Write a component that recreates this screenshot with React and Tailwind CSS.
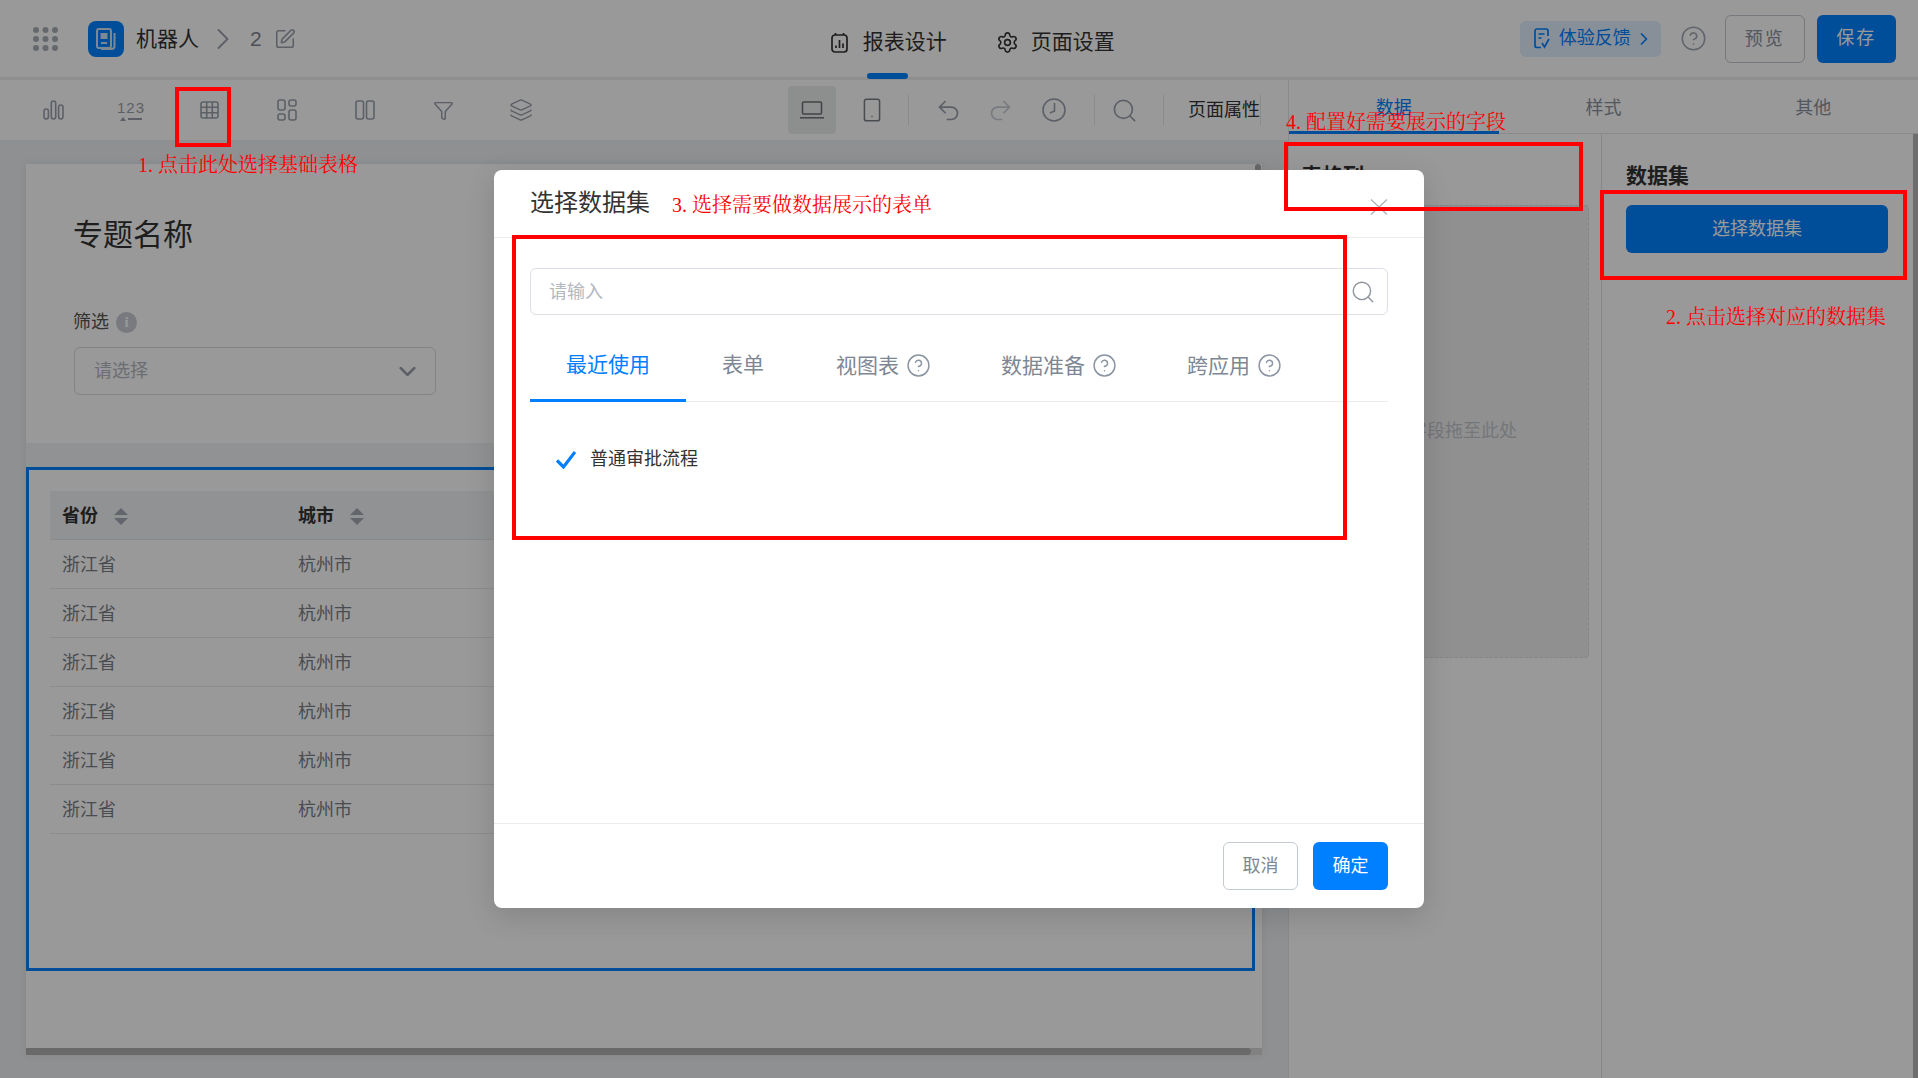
import React from 'react';
import {
  ChevronDown, ChevronRight, CircleHelp, Funnel, Layers, Redo2, Search, Settings, Smartphone, SquarePen, Undo2,
} from 'lucide-react';

const GridDots = () => (
  <svg width="25" height="24" viewBox="0 0 25 24" fill="#a8adb5">
    {[3, 12.5, 22].map((x) => [3, 12, 21].map((y) => <circle key={`${x}-${y}`} cx={x} cy={y} r="3" />))}
  </svg>
);

const LogoIcon = () => (
  <svg width="22" height="24" viewBox="0 0 22 24" fill="none" stroke="#cfe3f7" strokeWidth="2">
    <rect x="2" y="2" width="14" height="19" rx="2" />
    <rect x="5.5" y="6" width="7" height="6" fill="#cfe3f7" stroke="none" />
    <path d="M6 16h6M19.5 6v13a3 3 0 0 1-3 3H6" />
  </svg>
);

const BarsIcon = () => (
  <svg width="21" height="20" viewBox="0 0 21 20" fill="none" stroke="currentColor" strokeWidth="1.6">
    <rect x="1" y="9" width="4.4" height="10" rx="2.2" />
    <rect x="8.3" y="1" width="4.4" height="18" rx="2.2" />
    <rect x="15.6" y="5" width="4.4" height="14" rx="2.2" />
  </svg>
);

const TableIcon = () => (
  <svg width="19" height="18" viewBox="0 0 19 18" fill="none" stroke="currentColor" strokeWidth="1.6">
    <rect x="1" y="1" width="17" height="16" rx="2" />
    <path d="M1 6.3h17M1 11.7h17M6.7 1v16M12.3 1v16" />
  </svg>
);

const BlocksIcon = () => (
  <svg width="20" height="22" viewBox="0 0 20 22" fill="none" stroke="currentColor" strokeWidth="1.6">
    <rect x="1" y="1" width="7" height="10" rx="2" />
    <rect x="12" y="1" width="7" height="6" rx="2" />
    <rect x="1" y="15" width="7" height="6" rx="2" />
    <rect x="12" y="11" width="7" height="10" rx="2" />
  </svg>
);

const ColumnsIcon = () => (
  <svg width="20" height="20" viewBox="0 0 20 20" fill="none" stroke="currentColor" strokeWidth="1.6">
    <rect x="1" y="1" width="7.5" height="18" rx="2" />
    <rect x="11.5" y="1" width="7.5" height="18" rx="2" />
  </svg>
);

const LaptopIcon = () => (
  <svg width="24" height="18" viewBox="0 0 24 18" fill="none" stroke="currentColor" strokeWidth="1.5">
    <rect x="2.5" y="1" width="19" height="12" rx="1" />
    <path d="M0 16.8h24" />
  </svg>
);

const ClockIcon = () => (
  <svg width="24" height="24" viewBox="0 0 24 24" fill="none" stroke="currentColor" strokeWidth="1.6">
    <circle cx="12" cy="12" r="11" />
    <path d="M12.5 5v8L8 15" />
  </svg>
);

const ReportIcon = () => (
  <svg width="17" height="21" viewBox="0 0 17 21" fill="none" stroke="currentColor" strokeWidth="1.7">
    <rect x="1" y="3" width="15" height="17" rx="3" />
    <path d="M4.5 1v2M12.5 1v2M5 16v-2.5M8.5 16V8M12 16v-4.5" />
  </svg>
);

const FeedbackIcon = () => (
  <svg width="16" height="21" viewBox="0 0 16 21" fill="none" stroke="currentColor" strokeWidth="1.7">
    <path d="M7 19.5H3a2 2 0 0 1-2-2V3a2 2 0 0 1 2-2h9a2 2 0 0 1 2 2v5M4.5 6h6M4.5 10h3" />
    <path d="m8 15 2.5 4L15 11" />
  </svg>
);

const CloseIcon = () => (
  <svg width="18" height="16" viewBox="0 0 18 16" fill="none" stroke="#aab0b8" strokeWidth="1.2">
    <path d="M1 0.5 17 15.5M17 0.5 1 15.5" />
  </svg>
);

const CheckIcon = () => (
  <svg width="20" height="18" viewBox="0 0 20 18" fill="none" stroke="#0080ff" strokeWidth="3.2">
    <path d="M1 9.5 7.5 16 19 1" />
  </svg>
);

const SortIcon = () => (
  <span className="flex flex-col gap-[3px]">
    <span className="h-0 w-0 border-x-[7px] border-b-[7px] border-x-transparent border-b-[#a4aab4]"></span>
    <span className="h-0 w-0 border-x-[7px] border-t-[7px] border-x-transparent border-t-[#a4aab4]"></span>
  </span>
);

const ToolIcon = ({ children }) => (
  <div className="flex h-full w-[78px] items-center justify-center">{children}</div>
);

const rows = [1, 2, 3, 4, 5, 6];

const TopBar = () => (
  <div className="flex h-[80px] shrink-0 items-center border-b-[3px] border-[#eeeff1]">
    <div className="ml-[33px]"><GridDots /></div>
    <div className="ml-[30px] flex h-[36px] w-[36px] items-center justify-center rounded-[8px] bg-[#0080ff]">
      <LogoIcon />
    </div>
    <span className="ml-[12px] text-[21px] text-[#333]">机器人</span>
    <ChevronRight size={36} strokeWidth={1.25} className="ml-[6px] text-[#9aa1ab]" />
    <span className="ml-[9px] text-[21px] text-[#7d8590]">2</span>
    <SquarePen size={22} strokeWidth={1.7} className="ml-[12px] text-[#9aa1ab]" />
    <div className="ml-[535px] flex h-full items-center pt-[7px] text-[21px] text-[#333]">
      <div className="relative flex h-full items-center">
        <span className="mr-[15px]"><ReportIcon /></span>
        报表设计
        <span className="absolute bottom-[-2px] left-[36px] h-[6px] w-[41px] rounded-full bg-[#0080ff]"></span>
      </div>
      <Settings size={23} strokeWidth={1.7} className="ml-[49px] mr-[12px]" />
      页面设置
    </div>
    <div className="ml-[405px] flex h-[36px] w-[141px] items-center rounded-[6px] bg-[#e1eeff] pl-[14px] text-[18px] text-[#0080ff]">
      <FeedbackIcon />
      <span className="ml-[9px]">体验反馈</span>
      <ChevronRight size={20} strokeWidth={2} className="ml-[3px]" />
    </div>
    <CircleHelp size={27} strokeWidth={1.4} className="ml-[19px] text-[#a3a9b2]" />
    <button className="ml-[18px] h-[48px] w-[80px] rounded-[6px] border border-[#c4c9d1] pt-[2px] text-[18px] tracking-[2px] text-[#8a929e]">预览</button>
    <button className="ml-[12px] h-[48px] w-[79px] rounded-[6px] bg-[#0080ff] text-[18px] tracking-[2px] text-white">保存</button>
  </div>
);

const Toolbar = () => (
  <div className="ml-[2px] flex h-[60px] shrink-0 items-center pl-[12px] text-[#9aa1ab]">
    <ToolIcon><BarsIcon /></ToolIcon>
    <ToolIcon>
      <div className="flex flex-col items-center leading-none">
        <span className="text-[15px] leading-[17px] tracking-[1px]">123</span>
        <span className="mt-[1px] flex items-center gap-[2px]">
          <span className="h-0 w-0 border-x-[3px] border-b-[4px] border-x-transparent border-b-current"></span>
          <span className="h-[2px] w-[14px] bg-current"></span>
        </span>
      </div>
    </ToolIcon>
    <ToolIcon><TableIcon /></ToolIcon>
    <ToolIcon><BlocksIcon /></ToolIcon>
    <ToolIcon><ColumnsIcon /></ToolIcon>
    <ToolIcon><Funnel size={21} strokeWidth={1.7} /></ToolIcon>
    <ToolIcon><Layers size={24} strokeWidth={1.5} /></ToolIcon>
    <div className="ml-[228px] flex h-[48px] w-[48px] items-center justify-center rounded-[4px] bg-[#eceeef] text-[#6e7075]">
      <LaptopIcon />
    </div>
    <div className="ml-[12px] flex w-[48px] justify-center text-[#7b7f85]">
      <Smartphone size={26} strokeWidth={1.4} />
    </div>
    <div className="ml-[12px] h-[30px] w-px bg-[#e5e7ea]"></div>
    <Undo2 size={27} strokeWidth={1.5} className="ml-[26px]" />
    <Redo2 size={27} strokeWidth={1.5} className="ml-[25px] text-[#c9ced5]" />
    <span className="ml-[28px]"><ClockIcon /></span>
    <div className="ml-[28px] h-[30px] w-px bg-[#e5e7ea]"></div>
    <Search size={27} strokeWidth={1.5} className="ml-[16px]" />
    <div className="ml-[25px] h-[30px] w-px bg-[#e5e7ea]"></div>
    <span className="ml-[24px] text-[18px] text-[#333]">页面属性</span>
    <div className="h-[30px] w-px bg-[#e5e7ea]"></div>
  </div>
);

const Canvas = () => (
  <div className="flex min-h-0 flex-1 flex-col bg-[#edf0f3] pl-[26px] pt-[24px]">
    <div className="relative flex h-[891px] w-[1236px] flex-col bg-white shadow-[0_0_8px_rgba(0,0,0,0.08)]">
      <span className="absolute right-[1px] top-0 h-[6px] w-[6px] rounded-t-full bg-[#b0b0b0]"></span>
      <div className="h-[279px] shrink-0 pl-[48px] pt-[51px]">
        <h1 className="-ml-[1px] text-[30px] leading-[40px] text-[#333]">专题名称</h1>
        <div className="-ml-[1px] mt-[55px] flex items-center text-[18px] leading-[24px] text-[#555]">
          筛选
          <span className="ml-[7px] flex h-[21px] w-[21px] items-center justify-center rounded-full bg-[#c8ccd4] font-['Liberation_Serif',serif] text-[15px] font-bold text-white">i</span>
        </div>
        <div className="mt-[13px] flex h-[48px] w-[362px] items-center justify-between rounded-[6px] border border-[#d8dbe0] pl-[19px] pr-[14px] text-[18px] text-[#b3b8c0]">
          请选择
          <ChevronDown size={27} strokeWidth={2.5} className="text-[#9aa1ab]" />
        </div>
      </div>
      <div className="h-[24px] shrink-0 bg-[#f1f3f5]"></div>
      <div className="h-[504px] w-[1229px] shrink-0 border-[3px] border-[#0080ff] px-[21px] pt-[21px] text-[18px]">
        <div className="flex h-[49px] items-center border-b border-[#e3e6ea] bg-[#f1f3f6] pl-[12px] pt-[2px] font-bold text-[#333]">
          <div className="flex w-[236px] items-center gap-[16px]">省份<SortIcon /></div>
          <div className="flex items-center gap-[16px]">城市<SortIcon /></div>
        </div>
        {rows.map((r) => (
          <div key={r} className="flex h-[49px] items-center border-b border-[#e8eaee] pl-[12px] pt-[2px] text-[#7a7f87]">
            <div className="w-[236px]">浙江省</div>
            <div>杭州市</div>
          </div>
        ))}
      </div>
      <div className="mt-auto flex h-[7px] bg-[#d8d8d8]">
        <div className="h-full w-[1225px] rounded-r-full bg-[#b0b0b0]"></div>
      </div>
    </div>
  </div>
);

const SidePanel = () => (
  <div className="flex min-h-0 flex-1 flex-col border-l border-[#e3e6ea]">
    <div className="flex h-[54px] shrink-0 border-b border-[#e3e6ea] text-[18px] text-[#8a929e]">
      {['数据', '样式', '其他'].map((t, i) => (
        <div key={t} className={`relative flex flex-1 items-center justify-center pt-[3px] ${i === 0 ? 'text-[#0080ff]' : ''}`}>
          {t}
          {i === 0 && <span className="absolute bottom-[-1px] left-0 h-[3px] w-[210px] bg-[#0080ff]"></span>}
        </div>
      ))}
    </div>
    <div className="relative flex min-h-0 flex-1">
      <div className="w-[313px] shrink-0 border-r border-[#dfe2e6] pl-[12px] pt-[27px]">
        <div className="text-[21px] font-bold leading-[30px] text-[#333]">表格列</div>
        <div className="mt-[14px] flex h-[453px] w-[288px] items-center justify-center rounded-[4px] border border-dashed border-[#dcdfe3] bg-[#f1f1f1] text-[18px] text-[#c2c6cc]">
          请将字段拖至此处
        </div>
      </div>
      <div className="flex-1 pl-[24px] pt-[27px]">
        <div className="text-[21px] font-bold leading-[30px] text-[#333]">数据集</div>
        <button className="mt-[14px] h-[48px] w-[262px] rounded-[6px] bg-[#0080ff] text-[18px] text-white">选择数据集</button>
      </div>
      <div className="absolute bottom-0 right-0 top-0 w-[5px] bg-[#b8b8b8]"></div>
    </div>
  </div>
);

const HelpTab = ({ label }) => (
  <div className="flex items-center gap-[7px] px-[36px] text-[#7e8794]">
    {label}
    <CircleHelp size={25} strokeWidth={1.4} className="-mr-[2px] text-[#8b95a3]" />
  </div>
);

const Modal = () => (
  <div className="absolute left-[494px] top-[170px] flex h-[738px] w-[930px] flex-col rounded-[8px] bg-white shadow-[0_8px_30px_rgba(0,0,0,0.14)]">
    <div className="flex h-[68px] shrink-0 items-center justify-between border-b border-[#eaecef] pl-[36px] pr-[36px]">
      <span className="mb-[2px] text-[24px] leading-[32px] text-[#333]">选择数据集</span>
      <span className="mt-[6px]"><CloseIcon /></span>
    </div>
    <div className="flex min-h-0 flex-1 flex-col px-[36px] pt-[30px]">
      <div className="flex h-[47px] shrink-0 items-center justify-between rounded-[6px] border border-[#dcdfe5] pl-[18px] pr-[11px] text-[18px] text-[#b4b8bf]">
        <span className="pt-[2px]">请输入</span>
        <Search size={26} strokeWidth={1.3} className="text-[#8f959e]" />
      </div>
      <div className="mt-[21px] flex h-[66px] shrink-0 items-stretch border-b border-[#e9ebee] text-[21px]">
        <div className="relative flex w-[156px] items-center justify-center pb-[8px] text-[#0080ff]">
          最近使用
          <span className="absolute bottom-[-1px] left-0 h-[3px] w-full bg-[#0080ff]"></span>
        </div>
        <div className="flex items-center px-[36px] pb-[8px] text-[#7e8794]">表单</div>
        <div className="flex items-stretch pb-[6px]">
          <HelpTab label="视图表" />
          <HelpTab label="数据准备" />
          <HelpTab label="跨应用" />
        </div>
      </div>
      <div className="mt-[44px] flex items-center pl-[26px] text-[18px] text-[#333]">
        <CheckIcon />
        <span className="ml-[14px]">普通审批流程</span>
      </div>
    </div>
    <div className="flex h-[85px] shrink-0 items-start justify-end gap-[15px] border-t border-[#eaecef] pr-[36px] pt-[18px] text-[18px]">
      <button className="h-[48px] w-[75px] rounded-[6px] border border-[#c4cad3] text-[#7e8794]">取消</button>
      <button className="h-[48px] w-[75px] rounded-[6px] bg-[#0080ff] text-white">确定</button>
    </div>
  </div>
);

const Notes = () => (
  <div className="font-['Liberation_Serif','Noto_Serif_CJK_SC','Noto_Sans_CJK_SC',serif] text-[20px] leading-[24px] text-[#f00]">
    <div className="absolute left-[175px] top-[87px] h-[60px] w-[56px] border-[4px] border-[#f00]"></div>
    <div className="absolute left-[138px] top-[153px] whitespace-nowrap">1. 点击此处选择基础表格</div>
    <div className="absolute left-[1600px] top-[190px] h-[90px] w-[307px] border-[4px] border-[#f00]"></div>
    <div className="absolute left-[1666px] top-[305px] whitespace-nowrap">2. 点击选择对应的数据集</div>
    <div className="absolute left-[512px] top-[235px] h-[305px] w-[835px] border-[4px] border-[#f00]"></div>
    <div className="absolute left-[672px] top-[193px] whitespace-nowrap">3. 选择需要做数据展示的表单</div>
    <div className="absolute left-[1284px] top-[142px] h-[69px] w-[299px] border-[4px] border-[#f00]"></div>
    <div className="absolute left-[1286px] top-[110px] whitespace-nowrap">4. 配置好需要展示的字段</div>
  </div>
);

const App = () => {
  return (
    <div className="relative flex h-[1078px] w-[1918px] flex-col overflow-hidden bg-white font-['Liberation_Sans','Noto_Sans_CJK_SC',sans-serif]">
      <TopBar />
      <div className="flex min-h-0 flex-1">
        <div className="flex w-[1288px] shrink-0 flex-col">
          <Toolbar />
          <Canvas />
        </div>
        <SidePanel />
      </div>
      <div className="absolute inset-0 bg-black/40"></div>
      <Modal />
      <Notes />
    </div>
  );
};

export default App;
